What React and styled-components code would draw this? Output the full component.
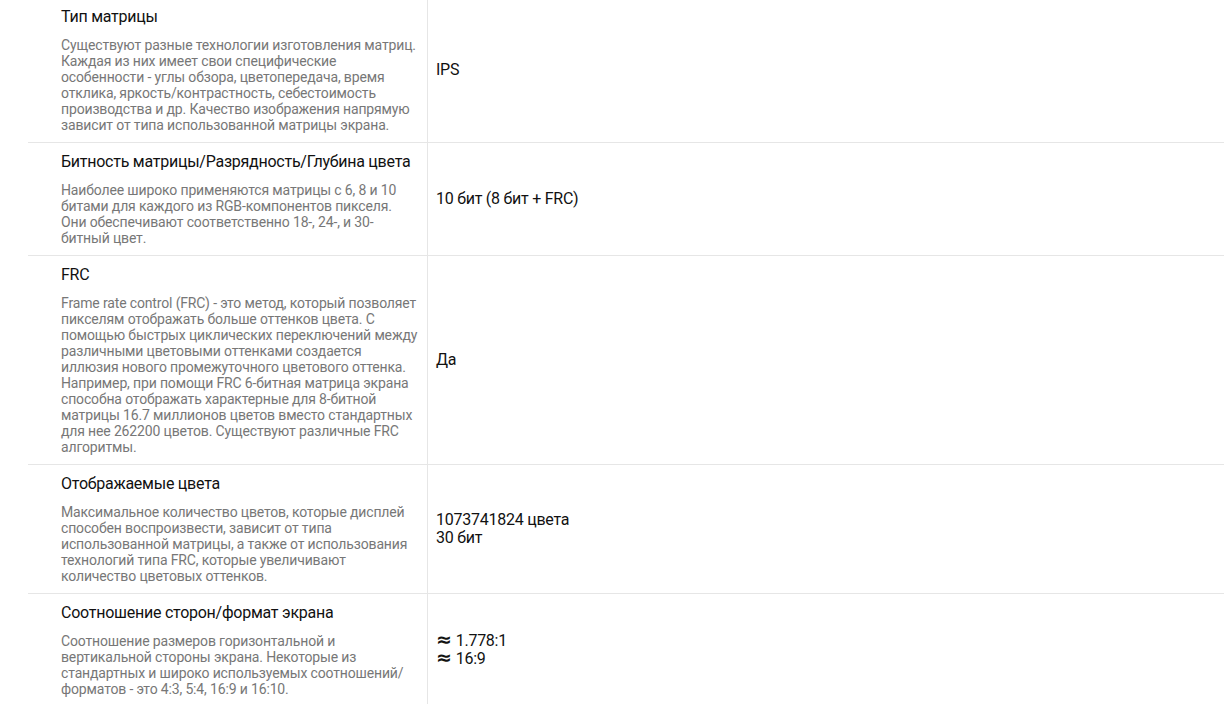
import React from "react";
import styled, { createGlobalStyle } from "styled-components";

const GlobalStyle = createGlobalStyle`
  html, body {
    margin: 0;
    padding: 0;
    background: #fff;
    overflow: hidden;
  }
  body {
    font-family: Roboto, "Noto Sans", Arial, sans-serif;
  }
`;

const specs = [
  {
    title: "Тип матрицы",
    desc: "Существуют разные технологии изготовления матриц. Каждая из них имеет свои специфические особенности\u00a0- углы обзора, цветопередача, время отклика, яркость/контрастность, себестоимость производства и др. Качество изображения напрямую зависит от типа использованной матрицы экрана.",
    value: ["IPS"],
  },
  {
    title: "Битность матрицы/Разрядность/Глубина цвета",
    desc: "Наиболее широко применяются матрицы с 6, 8 и 10 битами для каждого из RGB-компонентов пикселя. Они обеспечивают соответственно 18-, 24-, и 30-битный цвет.",
    value: ["10 бит (8 бит + FRC)"],
  },
  {
    title: "FRC",
    desc: "Frame rate control (FRC)\u00a0- это метод, который позволяет пикселям отображать больше оттенков цвета. С помощью быстрых циклических переключений между различными цветовыми оттенками создается иллюзия нового промежуточного цветового оттенка. Например, при помощи FRC 6-битная матрица экрана способна отображать характерные для 8-битной матрицы 16.7 миллионов цветов вместо стандартных для нее 262200 цветов. Существуют различные FRC алгоритмы.",
    value: ["Да"],
  },
  {
    title: "Отображаемые цвета",
    desc: "Максимальное количество цветов, которые дисплей способен воспроизвести, зависит от типа использованной матрицы, а также от использования технологий типа FRC, которые увеличивают количество цветовых оттенков.",
    value: ["1073741824 цвета", "30 бит"],
  },
  {
    title: "Соотношение сторон/формат экрана",
    desc: "Соотношение размеров горизонтальной и вертикальной стороны экрана. Некоторые из стандартных и широко используемых соотношений/ форматов\u00a0- это 4:3, 5:4, 16:9 и 16:10.",
    value: ["1.778:1", "16:9"],
    approx: true,
  },
];

const Table = styled.div`
  margin: -2px 0 0 28px;
  display: flex;
  flex-direction: column;
`;

const Row = styled.div`
  display: grid;
  grid-template-columns: 400px 1fr;
  border-bottom: 1px solid #e6e6e6;
`;

const Label = styled.div`
  box-sizing: border-box;
  padding: 9px 8px 9px 33px;
  border-right: 1px solid #e6e6e6;
`;

const Title = styled.div`
  font-size: 16px;
  line-height: 20px;
  letter-spacing: -0.25px;
  color: #111;
  margin-bottom: 10px;
`;

const Desc = styled.div`
  font-size: 14px;
  line-height: 16px;
  letter-spacing: -0.15px;
  color: #777;
`;

const Value = styled.div`
  display: flex;
  flex-direction: column;
  justify-content: center;
  padding-left: 8px;
  font-size: 16px;
  line-height: 18px;
  letter-spacing: -0.25px;
  color: #111;
`;

const Approx = styled.span`
  font-family: "DejaVu Sans", sans-serif;
  font-weight: bold;
  font-size: 19px;
  line-height: 0;
  margin-right: 4px;
`;

export default function App() {
  return (
    <>
      <GlobalStyle />
      <Table>
        {specs.map((s) => (
          <Row key={s.title}>
            <Label>
              <Title>{s.title}</Title>
              <Desc>{s.desc}</Desc>
            </Label>
            <Value>
              {s.value.map((v) => (
                <div key={v}>
                  {s.approx && <Approx>≈</Approx>}
                  {v}
                </div>
              ))}
            </Value>
          </Row>
        ))}
      </Table>
    </>
  );
}
